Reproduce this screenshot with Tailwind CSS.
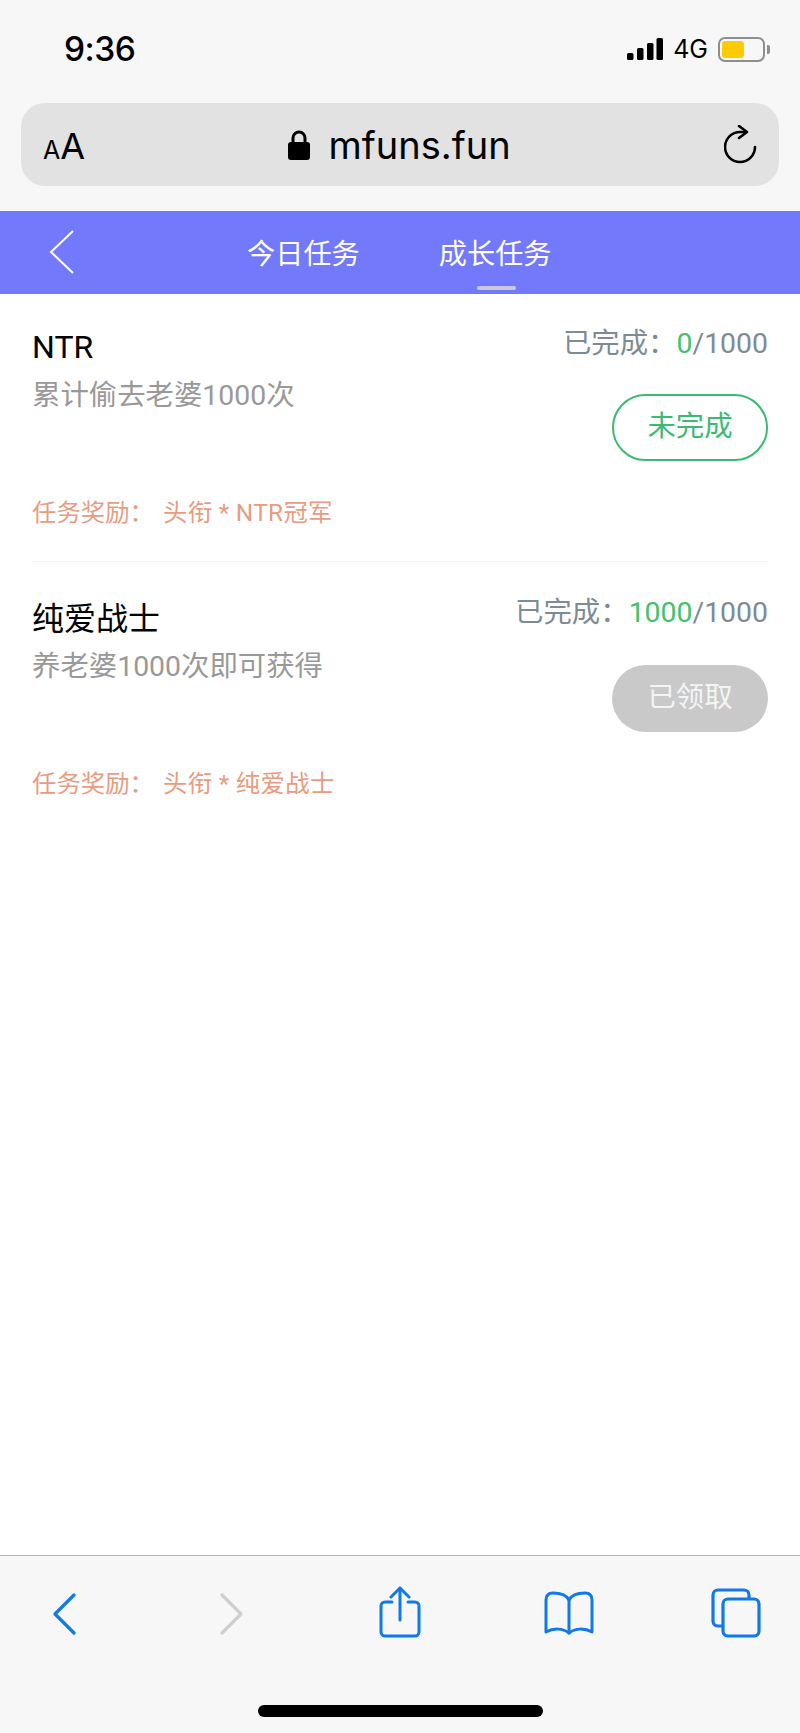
<!DOCTYPE html>
<html lang="zh-CN">
  <head>
    <meta charset="UTF-8" />
    <meta name="viewport" content="width=device-width, initial-scale=1.0" />
    <title>mfuns.fun</title>
    <script src="https://cdn.jsdelivr.net/npm/@tailwindcss/browser@4"></script>
  </head>
  <body class="bg-white font-['Roboto','Noto_Sans_CJK_SC',sans-serif]">
    <div class="w-[800px] h-[1733px] flex flex-col overflow-hidden">
      <!-- Browser chrome -->
      <div class="h-[211px] shrink-0 bg-[#f7f7f7] flex flex-col">
        <div class="h-[103px] pl-[64px] pr-[30px] flex justify-between items-start pt-[28px]">
          <span class="text-[33.5px] leading-[42px] font-medium text-black font-['Inter',sans-serif] tracking-[-0.5px]">9:36</span>
          <div class="flex items-center h-[42px]">
            <svg width="36" height="22" viewBox="0 0 36 22" fill="#000">
              <rect x="0" y="15" width="6.5" height="7" rx="1.5" />
              <rect x="10" y="10" width="6.5" height="12" rx="1.5" />
              <rect x="20" y="5" width="6.5" height="17" rx="1.5" />
              <rect x="29.5" y="0" width="6.5" height="22" rx="1.5" />
            </svg>
            <span class="ml-[10px] text-[25px] leading-[30px] text-black font-['Inter',sans-serif]">4G</span>
            <div class="ml-[10px] w-[47px] h-[25px] border-[2px] border-[#8e8e8e] rounded-[7px] p-[2px]">
              <div class="w-[22px] h-full bg-[#fdcb02] rounded-[3px]"></div>
            </div>
            <div class="ml-[2px] w-[3px] h-[9px] bg-[#8e8e8e] rounded-r-[2px]"></div>
          </div>
        </div>
        <div class="mx-[21px] h-[83px] bg-[#e2e2e2] rounded-[24px] flex items-center justify-between pl-[22px] pr-[21px]">
          <div class="flex items-baseline text-black font-['Inter',sans-serif] mt-[3px]">
            <span class="text-[25px] leading-none">A</span><span class="text-[36px] leading-none">A</span>
          </div>
          <div class="flex items-center mr-[10px]">
            <svg width="22" height="30" viewBox="0 0 22 30" fill="none">
              <path d="M5 13V8a6 6 0 0 1 12 0v5" stroke="#000" stroke-width="3" />
              <rect x="0" y="12" width="22" height="18" rx="3" fill="#000" />
            </svg>
            <span class="ml-[18px] text-[38px] leading-[48px] text-black font-['Inter',sans-serif]">mfuns.fun</span>
          </div>
          <svg width="34" height="40" viewBox="0 0 34 40" fill="none" stroke="#000" stroke-width="2.6" stroke-linecap="round" stroke-linejoin="round">
            <path d="M31 22a15 15 0 1 1-15-15h6" />
            <path d="M15 1l8 6-8 6" />
          </svg>
        </div>
      </div>

      <!-- Page header -->
      <div class="h-[83px] shrink-0 bg-[#7279fa] flex items-center relative">
        <svg class="absolute left-[49px] top-[19px]" width="26" height="44" viewBox="0 0 26 44" fill="none" stroke="#fff" stroke-width="2">
          <path d="M24 1L2 22l22 21" />
        </svg>
        <div class="pl-[247px] flex gap-[79px] text-[28.2px] leading-[40px] text-white mt-[5px]">
          <span>今日任务</span>
          <span>成长任务</span>
        </div>
        <div class="absolute left-[477px] top-[75px] w-[39px] h-[4px] rounded-full bg-[#c9c9d6]"></div>
      </div>

      <!-- Task list -->
      <div class="flex-1 px-[32px]">
        <div class="h-[268px] border-b border-[#f2f2f2] flex flex-col">
          <div class="flex justify-between pt-[24px]">
            <div>
              <div class="text-[32px] leading-[42px] text-black mt-[8px]">NTR</div>
              <div class="text-[28.4px] leading-[38px] text-[#999999] mt-[9px]">累计偷去老婆1000次</div>
            </div>
            <div class="flex flex-col items-end">
              <div class="text-[28.4px] leading-[38px] text-[#7d8b95] mt-[7px]">已完成：<span class="text-[#43c26a]">0</span>/1000</div>
              <div class="mt-[31px] w-[156px] h-[67px] rounded-full border-[2px] border-[#3dba71] flex items-center justify-center text-[28.4px] text-[#3dba71]">未完成</div>
            </div>
          </div>
          <div class="mt-[35px] text-[24.4px] leading-[34px] text-[#ea9b7f]"><span>任务奖励：</span><span class="ml-[9px] tracking-[0.3px]">头衔 * NTR冠军</span></div>
        </div>
        <div class="h-[267px] flex flex-col">
          <div class="flex justify-between pt-[31px]">
            <div>
              <div class="text-[32px] leading-[42px] text-black mt-[5px]">纯爱战士</div>
              <div class="text-[28.4px] leading-[38px] text-[#999999] mt-[8px]">养老婆1000次即可获得</div>
            </div>
            <div class="flex flex-col items-end">
              <div class="text-[28.4px] leading-[38px] text-[#7d8b95] mt-[1px]">已完成：<span class="text-[#43c26a]">1000</span>/1000</div>
              <div class="mt-[33px] w-[156px] h-[67px] rounded-full bg-[#c9c9c9] flex items-center justify-center text-[28.4px] text-[#f4f4f4]">已领取</div>
            </div>
          </div>
          <div class="mt-[35px] text-[24.4px] leading-[34px] text-[#ea9b7f]"><span>任务奖励：</span><span class="ml-[9px] tracking-[0.3px]">头衔 * 纯爱战士</span></div>
        </div>
      </div>

      <!-- Browser toolbar -->
      <div class="h-[178px] shrink-0 bg-[#f7f7f7] border-t border-[#b5b5b5] flex flex-col items-center">
        <div class="w-full h-[149px] flex items-start pt-[30px] pl-[52px]">
          <svg class="mt-[7px]" width="25" height="42" viewBox="0 0 25 42" fill="none" stroke="#1179e8" stroke-width="3.2" stroke-linecap="round" stroke-linejoin="round">
            <path d="M22 2L3 21l19 19" />
          </svg>
          <svg class="mt-[7px] ml-[142px]" width="25" height="42" viewBox="0 0 25 42" fill="none" stroke="#cfcfcf" stroke-width="3.2" stroke-linecap="round" stroke-linejoin="round">
            <path d="M3 2l19 19L3 40" />
          </svg>
          <svg class="ml-[135px]" width="42" height="52" viewBox="0 0 42 52" fill="none" stroke="#1179e8" stroke-width="3" stroke-linecap="round" stroke-linejoin="round">
            <path d="M13 16H6a4 4 0 0 0-4 4v26a4 4 0 0 0 4 4h30a4 4 0 0 0 4-4V20a4 4 0 0 0-4-4h-7" />
            <path d="M21 34V2" />
            <path d="M12 11l9-9 9 9" />
          </svg>
          <svg class="mt-[5px] ml-[123px]" width="50" height="44" viewBox="0 0 50 44" fill="none" stroke="#1179e8" stroke-width="3" stroke-linecap="round" stroke-linejoin="round">
            <path d="M25 9C22 3 15 2 9 2 5 2 2 4 2 9v32c7-4 17-4 23 1 6-5 16-5 23-1V9c0-5-3-7-7-7-6 0-13 1-16 7z" />
            <path d="M25 9v33" />
          </svg>
          <svg class="mt-[2px] ml-[117px]" width="50" height="50" viewBox="0 0 50 50" fill="none" stroke="#1179e8" stroke-width="3.2" stroke-linecap="round" stroke-linejoin="round">
            <path d="M11 38H7a5 5 0 0 1-5-5V7a5 5 0 0 1 5-5h26a5 5 0 0 1 5 5v3" />
            <rect x="12" y="11" width="36" height="37" rx="5" />
          </svg>
        </div>
        <div class="w-[285px] h-[12px] rounded-full bg-black"></div>
      </div>
    </div>
  </body>
</html>
